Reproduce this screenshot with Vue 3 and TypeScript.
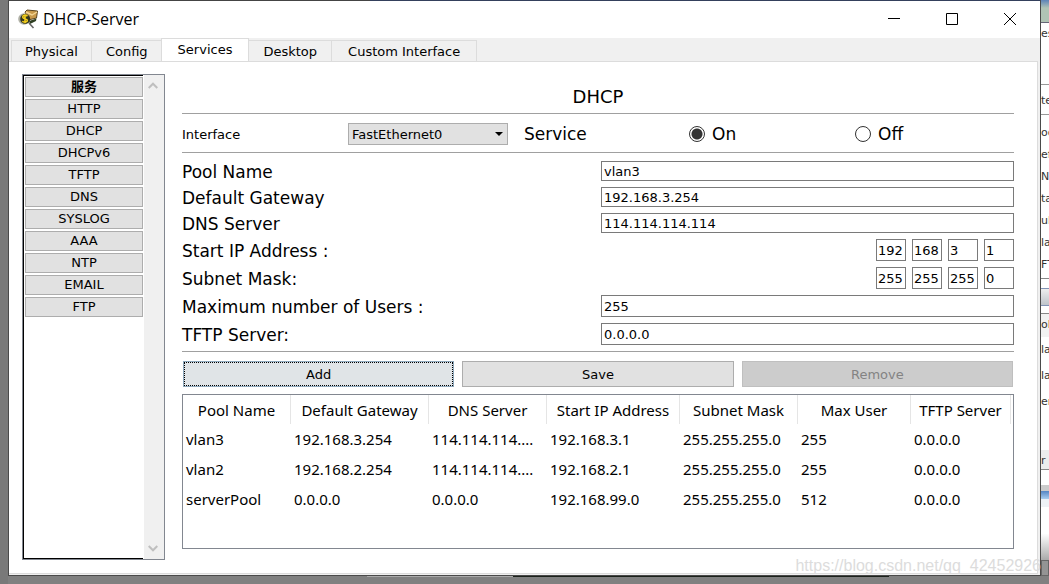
<script setup lang="ts">
import { ref } from 'vue'

interface Strip {
  kind: string
  text?: string
}

const tabs = [
  { name: 'Physical', size: 'narrow' },
  { name: 'Config', size: 'medium' },
  { name: 'Services', size: 'wide' },
  { name: 'Desktop', size: 'medium' },
  { name: 'Custom Interface', size: 'wide' },
]
const activeTab = ref('Services')

const services = ['HTTP', 'DHCP', 'DHCPv6', 'TFTP', 'DNS', 'SYSLOG', 'AAA', 'NTP', 'EMAIL', 'FTP']

const iface = ref('FastEthernet0')
const serviceState = ref('on')
const poolName = ref('vlan3')
const gateway = ref('192.168.3.254')
const dns = ref('114.114.114.114')
const startIp = ref(['192', '168', '3', '1'])
const mask = ref(['255', '255', '255', '0'])
const maxUsers = ref('255')
const tftp = ref('0.0.0.0')

const columns = ['Pool Name', 'Default Gateway', 'DNS Server', 'Start IP Address', 'Subnet Mask', 'Max User', 'TFTP Server']
const pools = [
  ['vlan3', '192.168.3.254', '114.114.114....', '192.168.3.1', '255.255.255.0', '255', '0.0.0.0'],
  ['vlan2', '192.168.2.254', '114.114.114....', '192.168.2.1', '255.255.255.0', '255', '0.0.0.0'],
  ['serverPool', '0.0.0.0', '0.0.0.0', '192.168.99.0', '255.255.255.0', '512', '0.0.0.0'],
]

const strips: Strip[] = [
  { kind: 'sky' },
  { kind: 'row', text: 'es' },
  { kind: 'space' },
  { kind: 'ruled', text: 'te' },
  { kind: 'pad' },
  { kind: 'row', text: 'oo' },
  { kind: 'row', text: 'ef' },
  { kind: 'row', text: 'N:' },
  { kind: 'row', text: 'ta' },
  { kind: 'row', text: 'ul' },
  { kind: 'row', text: 'la' },
  { kind: 'row', text: 'FT' },
  { kind: 'edge' },
  { kind: 'bar' },
  { kind: 'pad' },
  { kind: 'head', text: 'ol' },
  { kind: 'tall', text: 'la' },
  { kind: 'tall', text: 'la' },
  { kind: 'tall', text: 'er' },
  { kind: 'gap' },
  { kind: 'thumb', text: 'r' },
  { kind: 'low' },
  { kind: 'blue' },
  { kind: 'fade' },
  { kind: 'corner' },
]
</script>

<template>
  <div class="desktop">
    <main class="window">
      <div class="top-edge"></div>
      <header class="titlebar">
        <svg class="app-icon" viewBox="0 0 20 20" width="20" height="20" aria-hidden="true">
          <path d="M7 3 L9 1 L19.500 2 L18.500 9 L10 11 Z" fill="#c99a4c" stroke="#5a4520" stroke-width="1" />
          <path d="M8 3 L14 6 L19 3" fill="none" stroke="#f2d595" stroke-width="1.400" />
          <path d="M11 12 L18.500 9.500 L18 12 L12 15 Z" fill="#2f3f22" />
          <circle cx="6" cy="10" r="5.800" fill="#b0b1a6" />
          <circle cx="7.200" cy="10" r="5" fill="#33361d" />
          <path d="M9.500 7 C7 5.300 4.300 6.500 4.800 8.400 C5.300 10.200 9.300 9.300 9.300 11.400 C9.300 13.200 6.500 13.600 4.200 12.400 M7 5.500 V14.200" fill="none" stroke="#f4cf1c" stroke-width="1.600" />
          <path d="M11 14 L15.500 19" stroke="#666" stroke-width="1.600" />
        </svg>
        <h1>DHCP-Server</h1>
        <div class="controls">
          <button type="button" aria-label="Minimize">
            <svg viewBox="0 0 12 12" width="12" height="12"><path d="M0 5.5H12" /></svg>
          </button>
          <button type="button" aria-label="Maximize">
            <svg viewBox="0 0 12 12" width="12" height="12"><path d="M.5 .5H11.5V11.5H.5Z" /></svg>
          </button>
          <button type="button" aria-label="Close">
            <svg viewBox="0 0 12 12" width="12" height="12"><path d="M0 0L12 12M12 0L0 12" /></svg>
          </button>
        </div>
      </header>

      <nav class="tabs" role="tablist">
        <button
          v-for="tab in tabs"
          :key="tab.name"
          type="button"
          role="tab"
          class="tab"
          :class="[tab.size, { active: tab.name === activeTab }]"
          :aria-selected="tab.name === activeTab"
          @click="activeTab = tab.name"
        >{{ tab.name }}</button>
      </nav>

      <section class="panel">
        <aside class="sidebar">
          <div class="service-list">
            <button type="button" class="service heading">服务</button>
            <button v-for="name in services" :key="name" type="button" class="service">{{ name }}</button>
          </div>
          <div class="scrollbar">
            <button type="button" aria-label="Scroll up">
              <svg viewBox="0 0 10 7" width="10" height="7"><path d="M.7 6L5 1.7L9.3 6" /></svg>
            </button>
            <button type="button" aria-label="Scroll down">
              <svg viewBox="0 0 10 7" width="10" height="7"><path d="M.7 1L5 5.3L9.3 1" /></svg>
            </button>
          </div>
        </aside>

        <form class="config" @submit.prevent>
          <h2>DHCP</h2>
          <div class="service-row">
            <label class="small" for="iface">Interface</label>
            <div class="select-box">
              <select id="iface" v-model="iface">
                <option>FastEthernet0</option>
              </select>
              <svg viewBox="0 0 8 4" width="8" height="4" aria-hidden="true"><path d="M0 0H8L4 4Z" /></svg>
            </div>
            <span>Service</span>
            <label class="radio"><input v-model="serviceState" type="radio" name="service" value="on" />On</label>
            <label class="radio"><input v-model="serviceState" type="radio" name="service" value="off" />Off</label>
          </div>

          <div class="fields">
            <div class="field short">
              <label for="pool">Pool Name</label><input id="pool" v-model="poolName" type="text" />
            </div>
            <div class="field short">
              <label for="gateway">Default Gateway</label><input id="gateway" v-model="gateway" type="text" />
            </div>
            <div class="field short">
              <label for="dns">DNS Server</label><input id="dns" v-model="dns" type="text" />
            </div>
            <div class="field">
              <label for="ip0">Start IP Address :</label>
              <div class="octets">
                <input v-for="(_, i) in startIp" :id="'ip' + i" :key="i" v-model="startIp[i]" type="text" :aria-label="'Start IP octet ' + (i + 1)" />
              </div>
            </div>
            <div class="field">
              <label for="mask0">Subnet Mask:</label>
              <div class="octets">
                <input v-for="(_, i) in mask" :id="'mask' + i" :key="i" v-model="mask[i]" type="text" :aria-label="'Subnet mask octet ' + (i + 1)" />
              </div>
            </div>
            <div class="field">
              <label for="users">Maximum number of Users :</label><input id="users" v-model="maxUsers" type="text" />
            </div>
            <div class="field">
              <label for="tftp">TFTP Server:</label><input id="tftp" v-model="tftp" type="text" />
            </div>
          </div>

          <div class="actions">
            <button type="button" class="focused">Add</button>
            <button type="button">Save</button>
            <button type="button" disabled>Remove</button>
          </div>

          <div class="table-box">
            <table>
              <colgroup>
                <col class="c-pool" /><col class="c-gateway" /><col class="c-dns" /><col class="c-start" />
                <col class="c-mask" /><col class="c-max" /><col class="c-tftp" />
              </colgroup>
              <thead>
                <tr><th v-for="c in columns" :key="c" scope="col">{{ c }}</th></tr>
              </thead>
              <tbody>
                <tr v-for="row in pools" :key="row[0]">
                  <td v-for="(cell, i) in row" :key="i">{{ cell }}</td>
                </tr>
              </tbody>
            </table>
          </div>
        </form>
      </section>
    </main>

    <div class="behind">
      <div v-for="(s, i) in strips" :key="i" :class="s.kind">{{ s.text }}</div>
    </div>
    <div class="below"><span class="light"></span><span class="dark"></span></div>
    <div class="watermark">https://blog.csdn.net/qq_42452926</div>
  </div>
</template>

<style>
body {
  margin: 0;
  background: #797979;
}
</style>

<style scoped>
* {
  box-sizing: border-box;
}

.desktop {
  position: relative;
  display: grid;
  grid-template-columns: minmax(0, 1fr) 8px;
  grid-template-rows: 1fr 8px;
  min-height: 100vh;
  padding-left: 8px;
  background: #797979;
  font-family: "DejaVu Sans", Verdana, "Noto Sans CJK SC", sans-serif;
  font-size: 13px;
  color: #000;
}

button,
input,
select {
  font: inherit;
  color: inherit;
  margin: 0;
  border-radius: 0;
}

.window {
  display: flex;
  flex-direction: column;
  background: #f0f0f0;
  border: 1px solid #4a4a4a;
  border-top: 0;
}

.top-edge {
  height: 1px;
  background: linear-gradient(90deg, #444 35%, #34405c 35%);
}

.titlebar {
  display: flex;
  align-items: center;
  height: 37px;
  padding: 0 1px 0 9px;
  background: #fff;
}

.titlebar h1 {
  flex: 1;
  margin: 0 0 0 5px;
  padding-bottom: 2px;
  font: 400 16px/20px "Open Sans", "Noto Sans", sans-serif;
}

.app-icon {
  margin-bottom: 2px;
}

.controls {
  display: flex;
  align-self: stretch;
}

.controls button {
  display: flex;
  align-items: center;
  justify-content: center;
  width: 58px;
  padding: 0 0 1px;
  border: 0;
  background: none;
}

.controls path {
  fill: none;
  stroke: #000;
  stroke-width: 1;
}

.tabs {
  display: flex;
  align-items: flex-end;
  height: 23px;
  padding-left: 2px;
}

.tab {
  height: 21px;
  padding: 0 13px;
  border: 1px solid #dcdcdc;
  border-right-width: 0;
  border-bottom: 0;
  background: #f0f0f0;
  line-height: 21px;
}

.tab.medium {
  padding: 0 14px;
}

.tab.wide {
  padding: 0 16px;
}

.tab:last-child,
.tab.active {
  border-right-width: 1px;
}

.tab.active {
  height: 24px;
  margin: 0 0 -1px -1px;
  padding-bottom: 2px;
  background: #fff;
}

.tab.active + .tab {
  border-left-width: 0;
}

.panel {
  flex: 1;
  display: grid;
  grid-template-columns: 143px minmax(0, 1fr);
  gap: 17px;
  margin: 0 2px 1px 0;
  padding: 12px 23px 13px 13px;
  border: 1px solid #dcdcdc;
  border-left: 0;
  background: #fff;
}

.sidebar {
  display: grid;
  grid-template-columns: 1fr 21px;
  border: 1px solid #828790;
}

.service-list {
  display: flex;
  flex-direction: column;
  gap: 2px;
  padding: 1px 0 1px 1px;
  border: 1px solid #000;
  border-right: 0;
}

.service {
  height: 20px;
  padding: 0;
  border: 1px solid #adadad;
  background: #e1e1e1;
  line-height: 18px;
}

.service.heading {
  font-weight: 700;
}

.scrollbar {
  display: flex;
  flex-direction: column;
  justify-content: space-between;
  margin-left: 1px;
  background: #f0f0f0;
}

.scrollbar button {
  display: flex;
  align-items: center;
  justify-content: center;
  height: 21px;
  padding: 0 2px 0 0;
  border: 0;
  background: none;
}

.scrollbar path {
  fill: none;
  stroke: #bfbfbf;
  stroke-width: 2;
}

.config {
  display: flex;
  flex-direction: column;
  margin-bottom: 11px;
  font-size: 17px;
}

h2 {
  margin: 0;
  padding: 12px 0 5px;
  font-size: 18px;
  font-weight: 400;
  line-height: 22px;
  text-align: center;
}

.service-row {
  display: grid;
  grid-template-columns: 166fr 176fr 165fr 166fr 159fr;
  align-items: center;
  height: 40px;
  border: solid #a0a0a0;
  border-width: 1px 0;
  padding-top: 2px;
}

.small {
  font-size: 13px;
}

.select-box {
  position: relative;
  display: flex;
  width: 160px;
}

.select-box select {
  width: 100%;
  height: 22px;
  padding: 0 3px;
  border: 1px solid #adadad;
  background: #e1e1e1;
  appearance: none;
  font-size: 13px;
}

.select-box svg {
  position: absolute;
  right: 5px;
  top: 9px;
  pointer-events: none;
}

.radio {
  display: flex;
  align-items: center;
  gap: 7px;
}

.radio input {
  width: 16px;
  height: 16px;
  border: 1px solid #333;
  border-radius: 50%;
  background: #fff;
  appearance: none;
}

.radio input:checked {
  background: radial-gradient(circle, #333 5px, #fff 6px);
}

.fields {
  display: flex;
  flex-direction: column;
  gap: 6px;
  padding: 8px 0 6px;
  border-bottom: 1px solid #a0a0a0;
}

.field {
  display: grid;
  grid-template-columns: 1fr 1fr;
  grid-template-rows: 100%;
  gap: 6px;
  height: 22px;
  line-height: 24px;
}

.field.short {
  height: 20px;
  line-height: 22px;
}

.field input {
  min-width: 0;
  height: 100%;
  padding: 0 2px;
  border: 1px solid #7a7a7a;
  background: #fff;
  font-size: 13px;
  line-height: 18px;
}

.octets {
  display: flex;
  justify-content: flex-end;
  gap: 6px;
}

.octets input {
  width: 30px;
  padding: 0 1px;
}

.actions {
  display: grid;
  grid-template-columns: repeat(3, 1fr);
  gap: 8px;
  padding: 9px 1px 7px;
}

.actions button {
  height: 26px;
  padding: 0;
  border: 1px solid #adadad;
  background: #e1e1e1;
  font-size: 13px;
}

.actions .focused {
  border-color: #8fa9bd;
  outline: 1px dotted #000;
  outline-offset: -2px;
  background: #e0e4e7;
}

.actions button:disabled {
  border-color: #bfbfbf;
  background: #ccc;
  color: #838383;
}

.table-box {
  flex: 1;
  border: 1px solid #828790;
}

table {
  width: calc(100% - 2px);
  border-collapse: separate;
  border-spacing: 0;
  table-layout: fixed;
  font: 15px/30px "Noto Sans", "Open Sans", sans-serif;
}

.c-pool { width: 108px; }
.c-gateway { width: 138px; }
.c-dns { width: 118px; }
.c-start { width: 133px; }
.c-mask { width: 118px; }
.c-max { width: 113px; }
.c-tftp { width: 100px; }

th,
td {
  height: 30px;
  padding: 0 0 0 3px;
  overflow: hidden;
  font-weight: 400;
  text-align: left;
  white-space: nowrap;
}

th {
  height: 29px;
  padding: 0;
  border-right: 1px solid #e5e5e5;
  line-height: 28px;
  text-align: center;
}

.behind {
  overflow: hidden;
  background: #fff;
  font: 11px/22px "DejaVu Sans", Verdana, sans-serif;
  color: #333;
}

.behind div {
  overflow: hidden;
  white-space: nowrap;
}

.sky { height: 23px; background: linear-gradient(#5d83b8, #b0c4b5 8px, #b0c4b5); border-bottom: 1px solid #667; }
.row { height: 22px; }
.space { height: 39px; }
.behind .ruled { height: 31px; border: solid #999; border-width: 1px 0; line-height: 31px; }
.pad { height: 7px; }
.edge { height: 10px; margin-top: 2px; border-top: 1px solid #888; }
.bar { height: 18px; border: solid #8293b5; border-width: 1px 0; background: linear-gradient(#eee, #bfc4ca); }
.head { height: 24px; border-top: 1px solid #888; background: #f2f2f2; }
.behind .tall { height: 26px; line-height: 26px; }
.gap { height: 35px; }
.thumb { height: 20px; border-bottom: 1px solid #888; background: #ececec; }
.low { height: 21px; border-bottom: 6px solid #ccc; }
.blue { height: 16px; border-bottom: 8px solid #eef2f6; background: linear-gradient(#5585c4, #a9cdef); }
.fade { height: 53px; background: linear-gradient(#fff 50%, #aaa); }
.corner { height: 16px; border: 1px solid #666; background: #949494; }

.below {
  grid-column: 1 / -1;
  display: grid;
  grid-template-columns: 359fr 146fr 376fr 160fr;
  background: #808080;
}

.light,
.dark {
  height: 1px;
  background: #aaa;
}

.light {
  grid-column: 2;
}

.dark {
  background: #1c221c;
}

.watermark {
  position: absolute;
  right: 8px;
  bottom: 8px;
  font: 16px/20px "Liberation Sans", Arial, sans-serif;
  color: #dcdcdc;
  pointer-events: none;
}
</style>
